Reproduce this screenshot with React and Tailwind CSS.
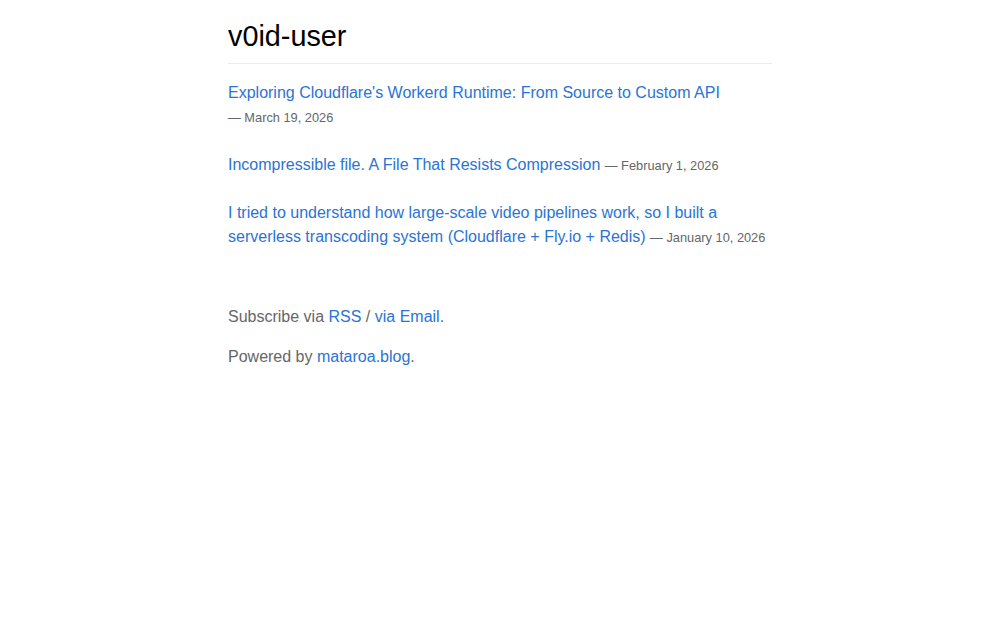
export default function App() {
  const posts = [
    { title: "Exploring Cloudflare's Workerd Runtime: From Source to Custom API", date: "March 19, 2026" },
    { title: "Incompressible file. A File That Resists Compression", date: "February 1, 2026" },
    { title: "I tried to understand how large-scale video pipelines work, so I built a serverless transcoding system (Cloudflare + Fly.io + Redis)", date: "January 10, 2026" },
  ];
  return (
    <div className="min-h-[625px] bg-white font-['Liberation_Sans',Arial,sans-serif] text-[16px] leading-[24px] text-[#111]">
      <div className="mx-auto w-[544px]">
        <header className="pt-[19px] pb-[9px] border-b border-[#ececec]">
          <h1 className="text-[28.8px] leading-[35px] text-black font-normal">v0id-user</h1>
        </header>
        <main className="pt-[17px]">
          <ul>
            {posts.map((p, i) => (
              <li key={i} className="mb-[24px]">
                <a href="#" className="text-[#2a74d5]">{p.title}</a>{" "}
                <small className="text-[12.8px] leading-none whitespace-nowrap text-[#666]">— {p.date}</small>
              </li>
            ))}
          </ul>
        </main>
        <footer className="pt-[32px] text-[#666]">
          <p className="mb-[16px]">
            Subscribe via <a href="#" className="text-[#2a74d5]">RSS</a> / <a href="#" className="text-[#2a74d5]">via Email</a>.
          </p>
          <p>
            Powered by <a href="#" className="text-[#2a74d5]">mataroa.blog</a>.
          </p>
        </footer>
      </div>
    </div>
  );
}
